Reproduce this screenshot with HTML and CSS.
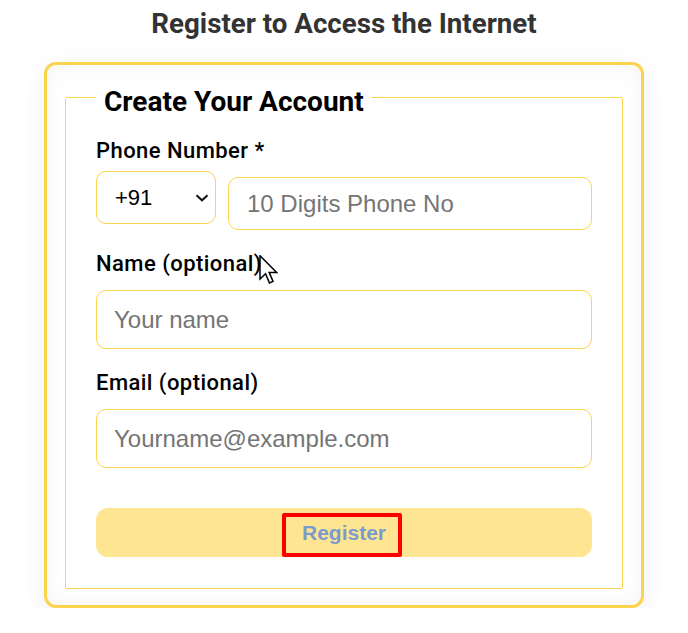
FILE: index.html
```html
<!DOCTYPE html>
<html lang="en">
<head>
<meta charset="utf-8">
<title>Register</title>
<link rel="stylesheet" href="styles.css">
</head>
<body>
<h1 class="title">Register to Access the Internet</h1>
<form class="card">
  <fieldset class="box">
    <legend class="legend">Create Your Account</legend>
    <label class="label label-first" for="phone">Phone Number *</label>
    <div class="phone-row">
      <div class="code-wrap">
        <select class="code" aria-label="Country code"><option>+91</option></select>
        <svg class="chevron" width="14" height="8" viewBox="0 0 14 8" aria-hidden="true"><path d="M1.5 1.3 L7 6.3 L12.5 1.3" fill="none" stroke="#111" stroke-width="2"/></svg>
      </div>
      <input id="phone" class="field field-phone" type="tel" placeholder="10 Digits Phone No">
    </div>
    <label class="label" for="name">Name (optional)</label>
    <input id="name" class="field field-tall" type="text" placeholder="Your name">
    <label class="label" for="email">Email (optional)</label>
    <input id="email" class="field field-tall" type="email" placeholder="Yourname@example.com">
    <button class="btn" type="button"><span class="btn-text">Register</span><span class="focus-ring"></span></button>
  </fieldset>
</form>
<svg class="cursor" width="20" height="30" viewBox="0 0 13 20" aria-hidden="true">
  <path d="M0.5 0.5 L0.5 16 L4.2 12.5 L6.8 18.6 L9.2 17.6 L6.6 11.6 L11.6 11.6 Z" fill="#fff" stroke="#000" stroke-width="1" stroke-linejoin="miter"/>
</svg>
</body>
</html>
```
FILE: styles.css
```css
html, body {
  margin: 0;
  padding: 0;
  background: #ffffff;
}
body {
  font-family: Roboto, "Open Sans", sans-serif;
  color: #000;
  padding-top: 7px;
}
.title {
  margin: 0 0 21px;
  text-align: center;
  font-size: 27.7px;
  font-weight: 700;
  color: #333333;
  line-height: 34px;
}
.card {
  box-sizing: border-box;
  width: 600px;
  margin: 0 auto;
  border: 3px solid #fcd34d;
  border-radius: 12px;
  background: #ffffff;
  box-shadow: 0 6px 24px rgba(0,0,0,0.07), inset 0 0 22px rgba(0,0,0,0.045);
  padding: 13px 18px 16px;
}
.box {
  margin: 0;
  border: 1px solid #fcd34d;
  border-radius: 2px;
  background: #ffffff;
  padding: 0 30px 31px;
  display: flex;
  flex-direction: column;
}
.legend {
  padding: 9px 8px 0;
  font-size: 28px;
  font-weight: 700;
  line-height: 29px;
}
.label {
  font-size: 22px;
  font-weight: 500;
  letter-spacing: 0.45px;
  line-height: 26px;
  margin-top: 21px;
  margin-bottom: 13px;
}
.label-first {
  margin-top: 22px;
}
.phone-row {
  display: flex;
  align-items: flex-start;
  gap: 12px;
}
.code-wrap {
  position: relative;
  margin-top: -6px;
}
.code {
  display: block;
  box-sizing: border-box;
  width: 120px;
  height: 53px;
  border: 1px solid #fcd34d;
  border-radius: 10px;
  background: #ffffff;
  padding: 0 30px 0 18px;
  font-family: "Liberation Sans", Arial, sans-serif;
  font-size: 22px;
  color: #000;
  -webkit-appearance: none;
  appearance: none;
  outline: none;
}
.chevron {
  position: absolute;
  left: 99px;
  top: 23px;
  pointer-events: none;
}
.field {
  box-sizing: border-box;
  width: 100%;
  border: 1px solid #fcd34d;
  border-radius: 10px;
  background: #ffffff;
  padding: 0 17px;
  font-family: "Liberation Sans", Arial, sans-serif;
  font-size: 24px;
  color: #000;
  outline: none;
}
.field::placeholder {
  color: #757575;
}
.field-phone {
  flex: 1;
  height: 53px;
  padding-left: 18px;
}
.field-tall {
  height: 59px;
}
.btn {
  position: relative;
  margin-top: 40px;
  height: 49px;
  border: none;
  border-radius: 12px;
  background: #fee591;
  font-family: "Liberation Sans", Arial, sans-serif;
  font-size: 21px;
  font-weight: 700;
  color: #7b9bcf;
  padding: 0;
}
.focus-ring {
  position: absolute;
  left: 186px;
  top: 5px;
  width: 120px;
  height: 44px;
  box-sizing: border-box;
  border: 4px solid #ff0000;
  border-radius: 2px;
}
.cursor {
  position: absolute;
  left: 259px;
  top: 255px;
}
```
